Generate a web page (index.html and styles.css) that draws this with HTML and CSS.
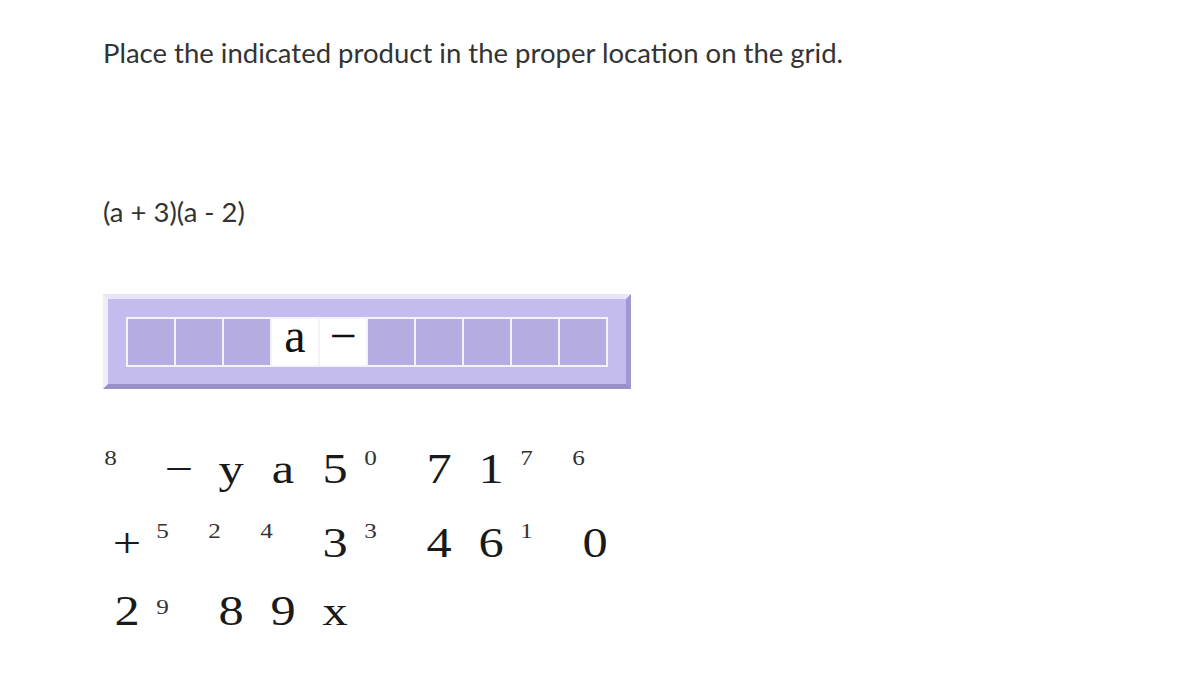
FILE: index.html
```html
<!DOCTYPE html>
<html lang="en">
<head>
    <meta charset="UTF-8">
    <meta name="viewport" content="width=device-width, initial-scale=1.0">
    <title>Product Grid</title>
    <link rel="stylesheet" href="styles.css">
</head>
<body>
    <div class="question">
        <p class="prompt">Place the indicated product in the proper location on the grid.</p>
        <p class="expr">(a + 3)(a - 2)</p>

        <div class="panel">
            <div class="grid">
                <div class="cell"></div>
                <div class="cell"></div>
                <div class="cell"></div>
                <div class="cell filled">a</div>
                <div class="cell filled">&minus;</div>
                <div class="cell"></div>
                <div class="cell"></div>
                <div class="cell"></div>
                <div class="cell"></div>
                <div class="cell"></div>
            </div>
        </div>

        <!-- tiles to drag onto the grid -->
        <div class="tiles row1">
            <div class="tile sup">8</div>
            <div class="tile">&minus;</div>
            <div class="tile">y</div>
            <div class="tile">a</div>
            <div class="tile">5</div>
            <div class="tile sup">0</div>
            <div class="tile">7</div>
            <div class="tile">1</div>
            <div class="tile sup">7</div>
            <div class="tile sup">6</div>
        </div>
        <div class="tiles row2">
            <div class="tile">+</div>
            <div class="tile sup">5</div>
            <div class="tile sup">2</div>
            <div class="tile sup">4</div>
            <div class="tile">3</div>
            <div class="tile sup">3</div>
            <div class="tile">4</div>
            <div class="tile">6</div>
            <div class="tile sup">1</div>
            <div class="tile">0</div>
        </div>
        <div class="tiles row3">
            <div class="tile">2</div>
            <div class="tile sup">9</div>
            <div class="tile">8</div>
            <div class="tile">9</div>
            <div class="tile">x</div>
        </div>
    </div>
</body>
</html>
```

FILE: styles.css
```css
body {
    margin: 0;
    background-color: #ffffff;
    font-family: Lato, "Open Sans", sans-serif;
    color: #333333;
}
.question {
    padding: 33px 0 0 103px;
}
.prompt {
    margin: 0;
    font-size: 27.5px;
    line-height: 40px;
}
.expr {
    margin: 119px 0 0 0;
    font-size: 27.5px;
    line-height: 40px;
}
.panel {
    margin-top: 62px;
    width: fit-content;
    padding: 18px 18px 17px 18px;
    background-color: #c4bcef;
    border: 5px solid;
    border-color: #e8e5f8 #a098d2 #9890c8 #efedfa;
}
.grid {
    display: grid;
    grid-template-columns: repeat(10, 46px);
    grid-auto-rows: 46px;
    gap: 2px;
    padding: 2px;
    background-color: #f4f2fb;
}
.cell {
    background-color: #b5ade2;
    font-family: "Liberation Serif", serif;
    font-size: 48px;
    line-height: 34px;
    text-align: center;
    color: #111111;
}
.cell.filled {
    background-color: #ffffff;
}
.tiles {
    display: flex;
    gap: 4px;
    font-family: "Liberation Serif", serif;
    color: #1a1a1a;
}
.row1 {
    margin-top: 59px;
    height: 74px;
}
.row2 {
    height: 68px;
}
.tile {
    width: 48px;
    font-size: 42px;
    line-height: 42px;
    text-align: center;
    transform: scaleX(1.2);
}
.tile.sup {
    font-size: 21px;
    line-height: 21px;
    text-align: left;
    padding-left: 1px;
    width: 47px;
    color: #333333;
    transform-origin: left center;
}
.row2 .tile.sup {
    margin-top: -1px;
}
.row3 .tile.sup {
    margin-top: 7px;
}
```
